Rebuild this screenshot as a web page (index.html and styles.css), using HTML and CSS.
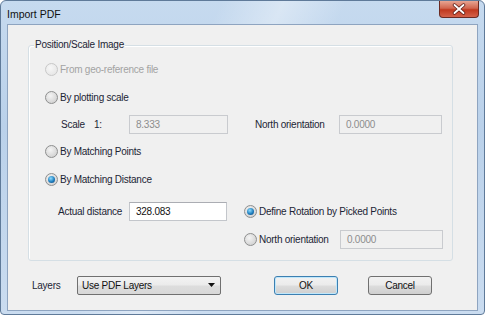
FILE: index.html
```html
<!DOCTYPE html>
<html lang="en">
<head>
    <meta charset="UTF-8">
    <title>Import PDF</title>
    <link rel="stylesheet" href="styles.css">
</head>
<body>
    <div class="window">
        <div class="titlebar">
            <span class="title">Import PDF</span>
            <div class="close">
                <svg width="14" height="12" viewBox="0 0 14 12">
                    <path d="M2.5 2 L11.5 10 M11.5 2 L2.5 10" stroke="#5a1a14" stroke-width="3.4" stroke-linecap="round"/>
                    <path d="M2.5 2 L11.5 10 M11.5 2 L2.5 10" stroke="#ffffff" stroke-width="1.9" stroke-linecap="round"/>
                </svg>
            </div>
        </div>
        <div class="client">
            <div class="group">
                <span class="legend">Position/Scale Image</span>

                <div class="row r1">
                    <span class="radio disabled"></span>
                    <span class="label disabled-text">From geo-reference file</span>
                </div>
                <div class="row r2">
                    <span class="radio"></span>
                    <span class="label">By plotting scale</span>
                </div>
                <div class="row r3">
                    <span class="label scale-lbl">Scale</span>
                    <span class="label ratio-lbl">1:</span>
                    <div class="field disabled-field scale-field">8.333</div>
                    <span class="label north-lbl">North orientation</span>
                    <div class="field disabled-field wide-field">0.0000</div>
                </div>
                <div class="row r4">
                    <span class="radio"></span>
                    <span class="label">By Matching Points</span>
                </div>
                <div class="row r5">
                    <span class="radio checked"></span>
                    <span class="label">By Matching Distance</span>
                </div>
                <div class="split">
                    <div class="row r6 left-part">
                        <span class="label dist-lbl">Actual distance</span>
                        <div class="field active-field">328.083</div>
                    </div>
                    <div class="right-part">
                        <div class="row r6">
                            <span class="radio checked"></span>
                            <span class="label">Define Rotation by Picked Points</span>
                        </div>
                        <div class="row r7">
                            <span class="radio"></span>
                            <span class="label north-opt">North orientation</span>
                            <div class="field disabled-field wide-field">0.0000</div>
                        </div>
                    </div>
                </div>
            </div>

            <div class="footer">
                <span class="label layers-lbl">Layers</span>
                <div class="select">
                    <span>Use PDF Layers</span>
                    <svg width="7" height="4" viewBox="0 0 7 4"><path d="M0 0 H7 L3.5 4 Z" fill="#111"/></svg>
                </div>
                <div class="btn default">OK</div>
                <div class="btn">Cancel</div>
            </div>
        </div>
    </div>
</body>
</html>
```

FILE: styles.css
```css
body {
    margin: 0;
    width: 485px;
    height: 315px;
    overflow: hidden;
    background: #ffffff;
    font-family: "Liberation Sans", Arial, sans-serif;
    font-size: 10px;
    letter-spacing: -0.25px;
    color: #1c2535;
}
.window {
    width: 483px;
    height: 313px;
    border: 1px solid #5f7a99;
    border-radius: 6px 6px 4px 4px;
    background:
        linear-gradient(115deg, rgba(255,255,255,0) 35%, rgba(255,255,255,0.35) 45%, rgba(255,255,255,0) 55%),
        linear-gradient(to bottom, #c6daef, #bad1ea 40%, #cadcf0);
    display: flex;
    flex-direction: column;
}
.titlebar {
    height: 23px;
    display: flex;
    justify-content: space-between;
    align-items: flex-start;
    padding-left: 6px;
}
.title {
    font-size: 10.5px;
    letter-spacing: 0;
    color: #111;
    margin-top: 7px;
}
.close {
    width: 40px;
    height: 17px;
    margin-right: 5px;
    border: 1px solid #6b2a22;
    border-top: none;
    border-radius: 0 0 4px 4px;
    background: linear-gradient(to bottom, #e8a593, #d1664f 45%, #c0391f 55%, #d4614a);
    display: flex;
    justify-content: center;
    align-items: center;
    box-sizing: border-box;
}
.client {
    margin: 0 6px 0 6px;
    height: 285px;
    background: #f0f0f0;
    border: 1px solid #8ea4c0;
    display: flex;
    flex-direction: column;
}
.group {
    position: relative;
    margin: 20px 24px 0 20px;
    height: 216px;
    border: 1px solid #d5dfe5;
    border-radius: 3px;
    box-shadow: inset 1px 1px 0 #ffffff;
    padding-top: 9px;
    box-sizing: border-box;
}
.legend {
    position: absolute;
    left: 5px;
    top: -7px;
    padding: 0 1px;
    background: #f0f0f0;
}
.row {
    display: flex;
    align-items: center;
    height: 28px;
}
.r1, .r2, .r4, .r5 {
    padding-left: 16px;
}
.r3 {
    height: 26px;
    padding-left: 32px;
}
.r6 {
    height: 32px;
}
.r7 {
    height: 24px;
}
.split {
    display: flex;
    margin-top: 2px;
}
.left-part {
    width: 215px;
    padding-left: 29px;
    box-sizing: border-box;
}
.label {
    white-space: nowrap;
}
.disabled-text {
    color: #a3a3a3;
}
.radio {
    width: 11px;
    height: 11px;
    border-radius: 50%;
    border: 1px solid #8e8f8f;
    background: radial-gradient(circle at 40% 35%, #f4f4f4, #d6d6d6 70%, #c9c9c9);
    margin-right: 2px;
    flex: none;
    position: relative;
}
.radio.disabled {
    border-color: #c8c8c8;
    background: radial-gradient(circle at 40% 35%, #f7f7f7, #e8e8e8 70%);
}
.radio.checked::after {
    content: "";
    position: absolute;
    left: 2px;
    top: 2px;
    width: 7px;
    height: 7px;
    border-radius: 50%;
    background: radial-gradient(circle at 40% 35%, #8fdcff, #1f7fbf 55%, #0d3b6e);
}
.scale-lbl {
    width: 33px;
}
.ratio-lbl {
    width: 35px;
}
.north-lbl {
    width: 84px;
    margin-left: 27px;
}
.dist-lbl {
    width: 71px;
}
.north-opt {
    width: 81px;
}
.field {
    width: 98px;
    height: 19px;
    box-sizing: border-box;
    padding: 0 0 0 6px;
    display: flex;
    align-items: center;
}
.scale-field {
    width: 99px;
}
.wide-field {
    width: 103px;
}
.disabled-field {
    border: 1px solid #c9cbcf;
    background: #f0f0f0;
    color: #8d8d8d;
}
.active-field {
    border: 1px solid #c3c6cb;
    border-top-color: #abadb3;
    background: #ffffff;
    color: #111;
}
.right-part {
    display: flex;
    flex-direction: column;
}
.footer {
    display: flex;
    align-items: center;
    height: 48px;
    padding-left: 24px;
}
.layers-lbl {
    width: 45px;
}
.select {
    width: 144px;
    height: 19px;
    box-sizing: border-box;
    border: 1px solid #707070;
    border-radius: 2px;
    background: linear-gradient(to bottom, #f3f3f3, #ebebeb 48%, #dddddd 52%, #d8d8d8);
    display: flex;
    align-items: center;
    justify-content: space-between;
    padding: 0 5px 0 4px;
    color: #111;
}
.btn {
    width: 64px;
    height: 19px;
    box-sizing: border-box;
    border: 1px solid #707070;
    border-radius: 3px;
    background: linear-gradient(to bottom, #f2f2f2, #ebebeb 48%, #dddddd 52%, #cfcfcf);
    display: flex;
    align-items: center;
    justify-content: center;
    color: #111;
    margin-left: 30px;
}
.btn.default {
    margin-left: 53px;
    border-color: #3c7fb1;
    box-shadow: inset 0 0 0 1px #bfe7fb;
}
```
